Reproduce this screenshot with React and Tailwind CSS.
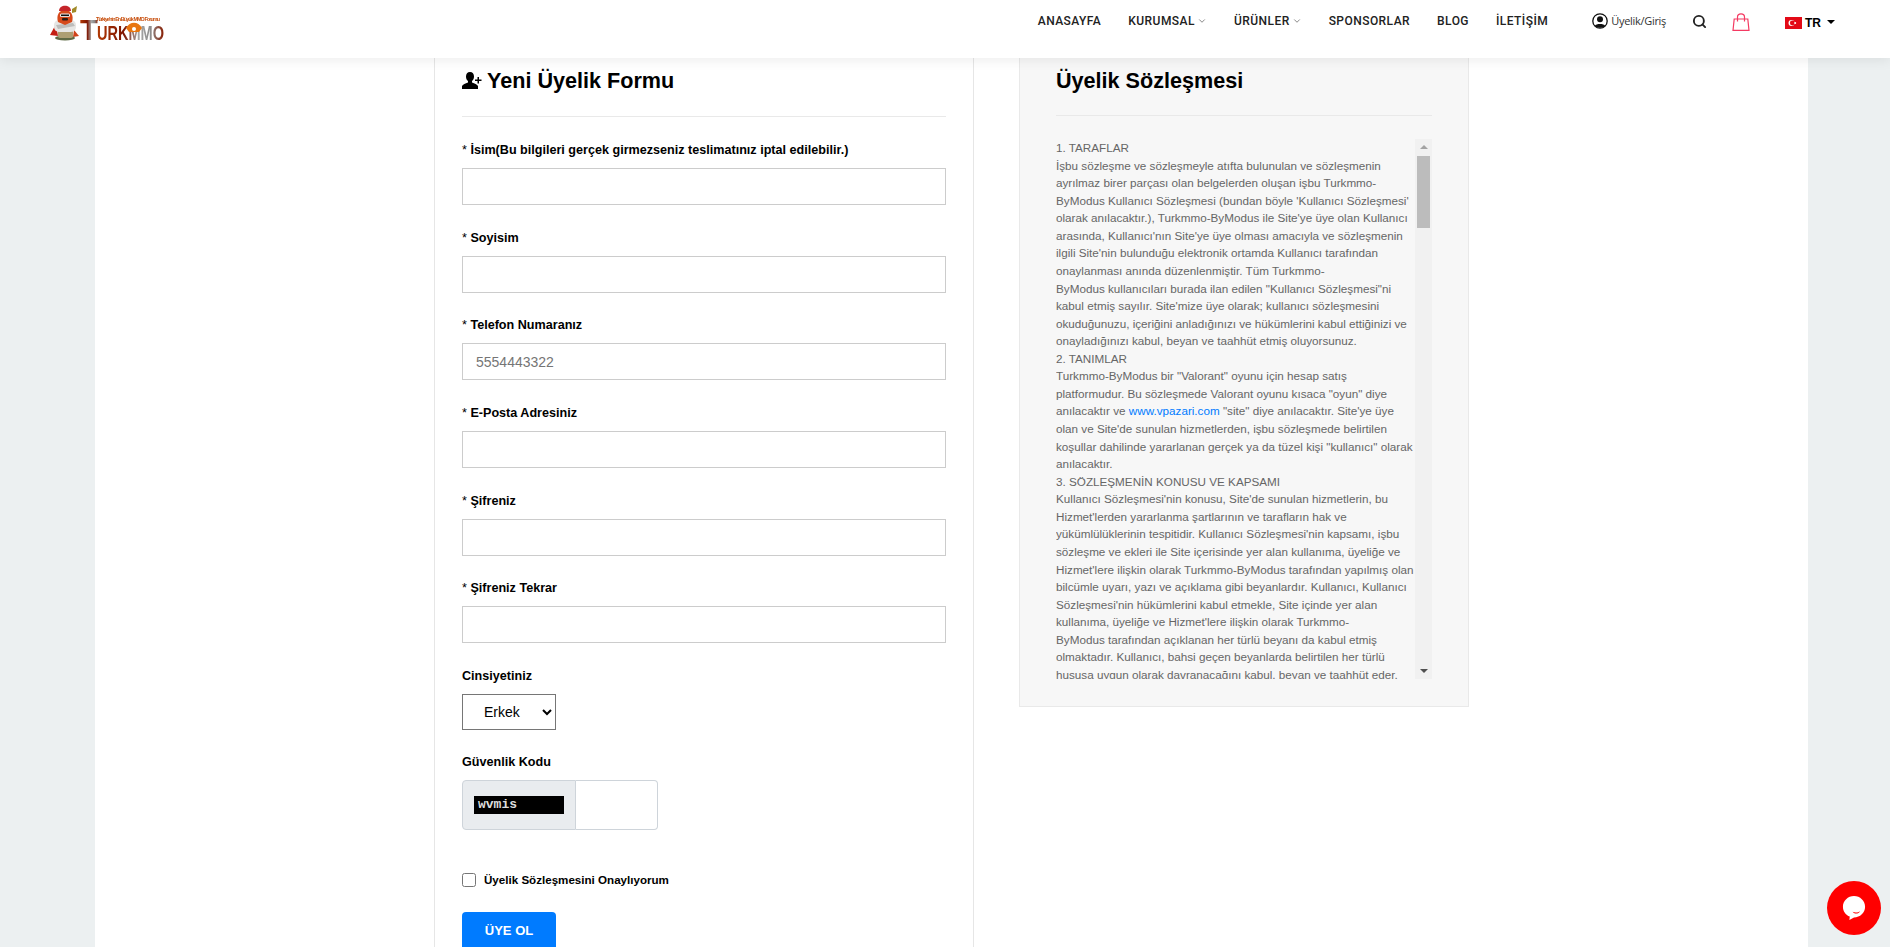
import { ChevronDown, Search } from 'lucide-react';

const navItems = [
  { label: 'ANASAYFA' },
  { label: 'KURUMSAL', caret: true },
  { label: 'ÜRÜNLER', caret: true },
  { label: 'SPONSORLAR' },
  { label: 'BLOG' },
  { label: 'İLETİŞİM' },
];

const fields = [
  { label: 'İsim(Bu bilgileri gerçek girmezseniz teslimatınız iptal edilebilir.)' },
  { label: 'Soyisim' },
  { label: 'Telefon Numaranız', placeholder: '5554443322' },
  { label: 'E-Posta Adresiniz' },
  { label: 'Şifreniz', type: 'password' },
  { label: 'Şifreniz Tekrar', type: 'password' },
];

const agreementTop = [
  '1. TARAFLAR',
  'İşbu sözleşme ve sözleşmeyle atıfta bulunulan ve sözleşmenin',
  'ayrılmaz birer parçası olan belgelerden oluşan işbu Turkmmo-',
  "ByModus Kullanıcı Sözleşmesi (bundan böyle 'Kullanıcı Sözleşmesi'",
  "olarak anılacaktır.), Turkmmo-ByModus ile Site'ye üye olan Kullanıcı",
  "arasında, Kullanıcı'nın Site'ye üye olması amacıyla ve sözleşmenin",
  "ilgili Site'nin bulunduğu elektronik ortamda Kullanıcı tarafından",
  'onaylanması anında düzenlenmiştir. Tüm Turkmmo-',
  'ByModus kullanıcıları burada ilan edilen "Kullanıcı Sözleşmesi"ni',
  "kabul etmiş sayılır. Site'mize üye olarak; kullanıcı sözleşmesini",
  'okuduğunuzu, içeriğini anladığınızı ve hükümlerini kabul ettiğinizi ve',
  'onayladığınızı kabul, beyan ve taahhüt etmiş oluyorsunuz.',
  '2. TANIMLAR',
  'Turkmmo-ByModus bir "Valorant" oyunu için hesap satış',
  'platformudur. Bu sözleşmede Valorant oyunu kısaca "oyun" diye',
];

const agreementBottom = [
  "olan ve Site'de sunulan hizmetlerden, işbu sözleşmede belirtilen",
  'koşullar dahilinde yararlanan gerçek ya da tüzel kişi "kullanıcı" olarak',
  'anılacaktır.',
  '3. SÖZLEŞMENİN KONUSU VE KAPSAMI',
  "Kullanıcı Sözleşmesi'nin konusu, Site'de sunulan hizmetlerin, bu",
  "Hizmet'lerden yararlanma şartlarının ve tarafların hak ve",
  "yükümlülüklerinin tespitidir. Kullanıcı Sözleşmesi'nin kapsamı, işbu",
  'sözleşme ve ekleri ile Site içerisinde yer alan kullanıma, üyeliğe ve',
  "Hizmet'lere ilişkin olarak Turkmmo-ByModus tarafından yapılmış olan",
  'bilcümle uyarı, yazı ve açıklama gibi beyanlardır. Kullanıcı, Kullanıcı',
  "Sözleşmesi'nin hükümlerini kabul etmekle, Site içinde yer alan",
  "kullanıma, üyeliğe ve Hizmet'lere ilişkin olarak Turkmmo-",
  'ByModus tarafından açıklanan her türlü beyanı da kabul etmiş',
  'olmaktadır. Kullanıcı, bahsi geçen beyanlarda belirtilen her türlü',
  'hususa uygun olarak davranacağını kabul, beyan ve taahhüt eder.',
];

function Logo() {
  return (
    <svg width="120" height="40" viewBox="0 0 120 40" className="overflow-visible blur-[0.5px]">
      <defs>
        <linearGradient id="logoText" x1="0" y1="0" x2="1" y2="0">
          <stop offset="0" stopColor="#b23a05" />
          <stop offset="0.4" stopColor="#7e1500" />
          <stop offset="0.62" stopColor="#a8a8a8" />
          <stop offset="0.8" stopColor="#8c8c8c" />
          <stop offset="1" stopColor="#8a1c00" />
        </linearGradient>
      </defs>
      {/* mascot */}
      <path d="M0 31 L6 20 L8 32 Z" fill="#c41f14" />
      <path d="M24 26 L29 32 L23 33 Z" fill="#d0431a" />
      <ellipse cx="15" cy="34" rx="10" ry="2.4" fill="#5f6a45" />
      <rect x="8" y="26" width="15" height="8" rx="2" fill="#ad9f73" />
      <rect x="4" y="16" width="22" height="12" rx="5" fill="#e6e6e4" />
      <path d="M6 21 L23 19 L25 22 L8 25 Z" fill="#bdbdbb" />
      <path d="M8 18 C6 11 9 6 15 6 C21 6 24 11 22 18 L15 21 Z" fill="#d6491a" />
      <rect x="10" y="9.5" width="10" height="3.5" rx="1.5" fill="#f2f2f2" />
      <rect x="11" y="10.5" width="8" height="1.6" fill="#111" />
      <rect x="12" y="14" width="6" height="2.6" rx="1" fill="#2a1a12" />
      <path d="M9 7 C9 0 21 0 21 7 Z" fill="#c4252a" />
      <path d="M22 5 L27 2 L26 8 L22 9 Z" fill="#a08a28" />
      {/* wordmark */}
      <text x="46" y="17" fill="#c8500f" fontSize="5.4" fontWeight="700" fontFamily="Liberation Sans, sans-serif" textLength="64">
        Türkiye'nin En Büyük MMO Forumu
      </text>
      <text x="30" y="36" fill="url(#logoText)" fontSize="29" fontWeight="700" fontFamily="Liberation Sans, sans-serif">
        T
      </text>
      <text x="47" y="36" fill="url(#logoText)" fontSize="21" fontWeight="700" fontFamily="Liberation Sans, sans-serif" textLength="67" lengthAdjust="spacingAndGlyphs">
        URKMMO
      </text>
      <path d="M76 24 C80 17 88 17 92 24 L89 28 L79 28 Z" fill="#e8750f" />
      <circle cx="84" cy="25" r="2" fill="#fff" />
    </svg>
  );
}

function UserPlusIcon() {
  return (
    <svg width="20" height="17" viewBox="0 0 20 17" fill="#000">
      <path d="M8 0 C5.4 0 4 2 4 4.6 C4 6.6 4.8 8.2 6 9 L6 10.4 C3.4 11.4 0.8 12.2 0 14 L0 17 L16 17 L16 14 C15.2 12.2 12.6 11.4 10 10.4 L10 9 C11.2 8.2 12 6.6 12 4.6 C12 2 10.6 0 8 0 Z" />
      <path d="M15.5 5 H17 V7.5 H19.5 V9 H17 V11.5 H15.5 V9 H13 V7.5 H15.5 Z" />
    </svg>
  );
}

function UserCircleIcon() {
  return (
    <svg width="16" height="16" viewBox="0 0 16 16" fill="none">
      <circle cx="8" cy="8" r="7.2" stroke="#111" strokeWidth="1.3" />
      <circle cx="8" cy="6.2" r="3" fill="#111" />
      <path d="M2.8 13 C4 10.4 12 10.4 13.2 13 C11.5 15.2 4.5 15.2 2.8 13 Z" fill="#111" />
    </svg>
  );
}

function BagIcon() {
  return (
    <svg width="18" height="18" viewBox="0 0 18 18" fill="none" stroke="#f43a62" strokeWidth="1.2">
      <path d="M2.2 6 H15.8 L17 17.4 H1 Z" />
      <path d="M5.5 8.5 V4 C5.5 -0.2 12.5 -0.2 12.5 4 V8.5" />
    </svg>
  );
}

function TurkeyFlag() {
  return (
    <svg width="17" height="12" viewBox="0 0 17 12">
      <rect width="17" height="12" fill="#e30a17" />
      <circle cx="6.5" cy="6" r="3" fill="#fff" />
      <circle cx="7.3" cy="6" r="2.4" fill="#e30a17" />
      <circle cx="10.2" cy="6" r="1" fill="#fff" />
    </svg>
  );
}

function Header() {
  return (
    <header className="relative z-10 flex h-[58px] shrink-0 items-start bg-white pl-[50px] pr-[55px] shadow-[0_2px_12px_rgba(0,0,0,0.08)]">
      <div className="pt-[4px]">
        <Logo />
      </div>
      <nav className="ml-auto flex h-[42px] items-center gap-[27px]">
        {navItems.map((item) => (
          <a key={item.label} href="#" className="flex items-center gap-[2px] font-['Roboto'] text-[12px] font-medium tracking-[0.45px] text-[#222]">
            {item.label}
            {item.caret && <ChevronDown size={10} strokeWidth={1.4} color="#333" />}
          </a>
        ))}
      </nav>
      <div className="ml-[44px] flex h-[42px] items-center gap-[3px]">
        <UserCircleIcon />
        <span className="font-['Open_Sans'] text-[11px] tracking-[-0.3px] text-[#333]">Üyelik/Giriş</span>
      </div>
      <div className="ml-[26px] flex h-[42px] items-center">
        <Search size={15} strokeWidth={3} color="#222" />
      </div>
      <div className="ml-[25px] flex h-[44px] items-center">
        <BagIcon />
      </div>
      <div className="ml-[35px] flex h-[46px] items-center">
        <TurkeyFlag />
        <span className="ml-[3px] text-[12px] font-bold text-black">TR</span>
        <span className="mb-[3px] ml-[6px] h-0 w-0 border-x-[4px] border-t-[4px] border-x-transparent border-t-black" />
      </div>
    </header>
  );
}

function FormField({ label, placeholder, type = 'text' }) {
  return (
    <div className="h-[87.7px]">
      <label className="block h-[25px] text-[12.6px] font-bold leading-[15px] text-black">
        <span className="font-normal">*</span> {label}
      </label>
      <input
        type={type}
        placeholder={placeholder}
        className="h-[37px] w-full border border-[#ccc] bg-white px-[13px] text-[14px] text-[#333] outline-none placeholder:text-[#757575]"
      />
    </div>
  );
}

function RegisterForm() {
  return (
    <section className="w-[540px] shrink-0 border-x border-[#e6e6e6] px-[27px]">
      <div className="flex h-[59px] items-start gap-[5px] border-b border-[#e9e9e9] pt-[7px]">
        <span className="pt-[7px]"><UserPlusIcon /></span>
        <h2 className="text-[21.6px] font-bold leading-[32px] text-black">Yeni Üyelik Formu</h2>
      </div>
      <div className="pt-[26px]">
        {fields.map((field) => (
          <FormField key={field.label} {...field} />
        ))}
      </div>
      <label className="block h-[25px] text-[12.6px] font-bold leading-[15px] text-black">Cinsiyetiniz</label>
      <select className="block h-[36px] w-[94px] border border-[#767676] bg-white pl-[17px] text-[14px] text-black">
        <option>Erkek</option>
        <option>Kadın</option>
      </select>
      <label className="mt-[25px] block h-[25px] text-[12.6px] font-bold leading-[15px] text-black">Güvenlik Kodu</label>
      <div className="flex h-[50px] w-[196px]">
        <div className="flex w-[114px] items-center justify-center rounded-l-[4px] border border-[#ced4da] bg-[#e9ecef]">
          <span className="flex h-[18px] w-[90px] items-center bg-black pl-[4px] font-['Liberation_Mono'] text-[13px] font-bold text-[#ddd]">wvmis</span>
        </div>
        <input type="text" className="w-[82px] rounded-r-[4px] border border-l-0 border-[#ced4da] bg-white outline-none" />
      </div>
      <label className="mt-[43px] flex h-[14px] items-center gap-[8px] text-[11.6px] font-bold text-black">
        <input type="checkbox" className="h-[14px] w-[14px] appearance-auto" />
        Üyelik Sözleşmesini Onaylıyorum
      </label>
      <button className="mt-[25px] h-[38px] w-[94px] rounded-[4px] bg-[#007bff] text-[13px] font-bold text-white">ÜYE OL</button>
    </section>
  );
}

function AgreementPanel() {
  return (
    <aside className="ml-[45px] h-[649px] w-[450px] border border-t-0 border-[#e9e9e9] bg-[#f7f7f7] px-[36px]">
      <div className="h-[58px] border-b border-[#e9e9e9] pt-[7px]">
        <h2 className="text-[21.6px] font-bold leading-[32px] text-black">Üyelik Sözleşmesi</h2>
      </div>
      <div className="mt-[23px] flex h-[540px]">
        <div className="w-[359px] shrink-0 overflow-hidden whitespace-nowrap text-[11.7px] leading-[17.56px] text-[#666]">
          {agreementTop.map((line) => (
            <div key={line}>{line}</div>
          ))}
          <div>
            anılacaktır ve <a href="#" className="text-[#007bff]">www.vpazari.com</a> "site" diye anılacaktır. Site'ye üye
          </div>
          {agreementBottom.map((line) => (
            <div key={line}>{line}</div>
          ))}
        </div>
        {/* scrollbar */}
        <div className="flex w-[17px] shrink-0 flex-col items-center bg-[#f1f1f1]">
          <div className="mt-[6px] h-0 w-0 border-x-[4px] border-b-[4px] border-x-transparent border-b-[#a3a3a3]" />
          <div className="mt-[7px] h-[72px] w-[13px] bg-[#bcbcbc]" />
          <div className="mb-[6px] mt-auto h-0 w-0 border-x-[4px] border-t-[4px] border-x-transparent border-t-[#505050]" />
        </div>
      </div>
    </aside>
  );
}

function ChatButton() {
  return (
    <button className="absolute bottom-[12px] right-[9px] flex h-[54px] w-[54px] items-center justify-center rounded-full bg-[#ff0000]">
      <svg width="24" height="26" viewBox="0 0 26 28">
        <path d="M13 1 C6.4 1 1 6.2 1 12.6 C1 17.6 4 21.6 8.4 23.2 L8 27 L13 24.2 C19.6 24.2 25 19 25 12.6 C25 6.2 19.6 1 13 1 Z" fill="#fff" />
        <path d="M11.5 18 C14 19.2 17.5 19 19.5 17.4 C18.4 20.4 13 20.8 11.5 18 Z" fill="#ff0000" />
      </svg>
    </button>
  );
}

export default function App() {
  return (
    <div className="relative flex h-screen flex-col overflow-hidden bg-[#ecf0f1] font-['Liberation_Sans',Arial,sans-serif]">
      <Header />
      <main className="ml-[95px] mr-[82px] flex flex-1 items-start bg-white pl-[339px]">
        <RegisterForm />
        <AgreementPanel />
      </main>
      <ChatButton />
    </div>
  );
}
